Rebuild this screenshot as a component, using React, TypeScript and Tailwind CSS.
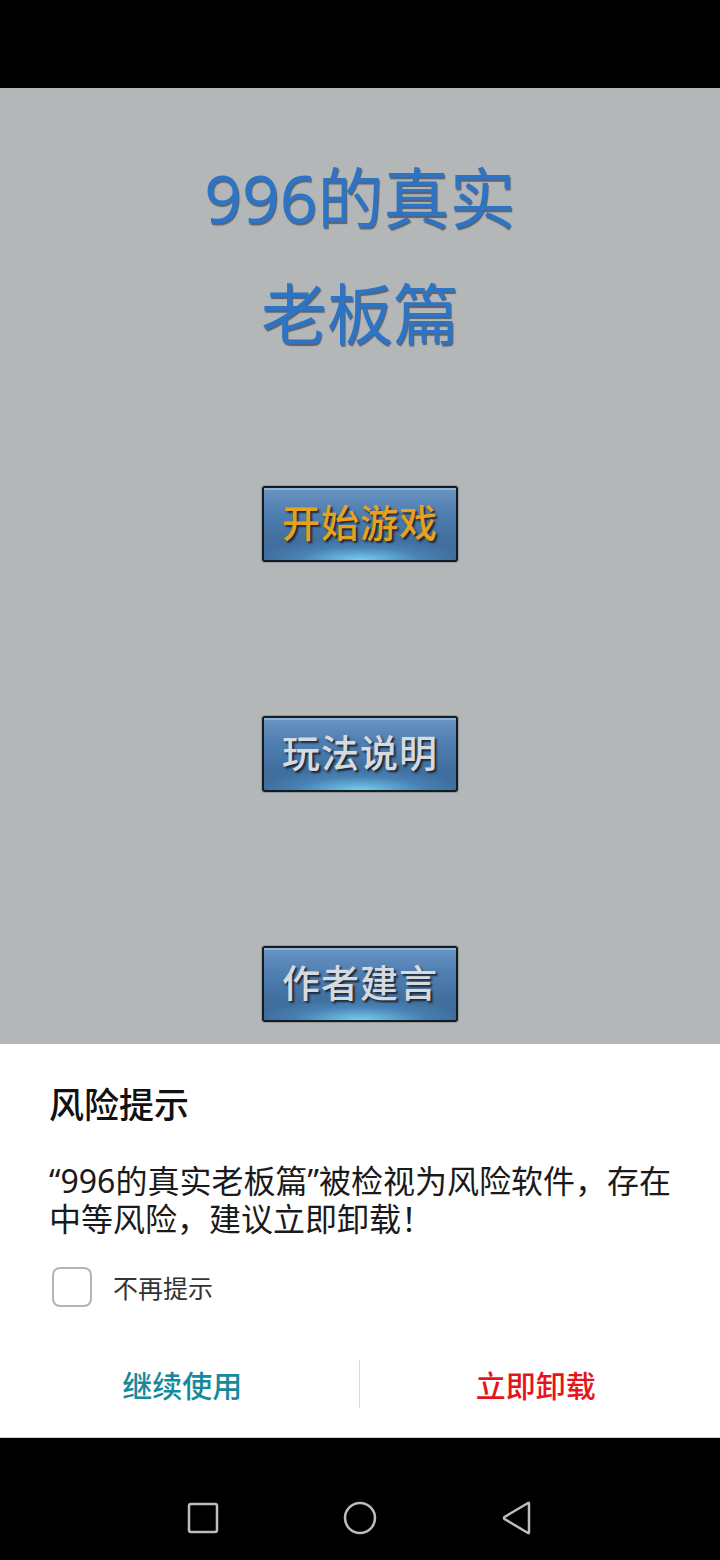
import React from 'react';

const cjk = { fontFamily: '"Noto Sans CJK SC", "Noto Sans", sans-serif' };
// Latin glyphs (digits, curly quotes) come from Noto Sans so the quotes stay narrow
const mixed = { fontFamily: '"Noto Sans", "Noto Sans CJK SC", sans-serif' };

function MenuButton({ label, gold }: { label: string; gold?: boolean }) {
  return (
    <button
      className="relative flex h-[76px] w-[196px] items-center justify-center overflow-hidden rounded-[3px] border-2 border-[#141c26] pb-[6px] shadow-[0_0_0_1px_rgba(90,100,110,0.35)]"
      style={{
        background:
          'radial-gradient(ellipse 55% 30% at 50% 100%, rgba(120,210,245,0.95), rgba(90,170,225,0.35) 60%, rgba(0,0,0,0) 100%), linear-gradient(180deg, #6a94c2 0%, #4f7eb1 35%, #41709f 70%, #3d6a9a 100%)',
      }}
    >
      <span className="pointer-events-none absolute inset-x-0 top-0 h-[2px] bg-[#8fb3d8]" />
      <span
        className={
          gold
            ? 'text-[38px] font-medium leading-none tracking-[1px] text-[#e6a11f] [text-shadow:2px_2px_2px_rgba(20,25,35,0.85)]'
            : 'text-[38px] font-medium leading-none tracking-[1px] text-[#d6dadf] [text-shadow:2px_2px_2px_rgba(20,25,35,0.85)]'
        }
      >
        {label}
      </span>
    </button>
  );
}

export default function App() {
  return (
    <div className="flex h-[1560px] w-[720px] flex-col bg-black" style={cjk}>
      {/* status bar */}
      <div className="h-[88px] shrink-0 bg-black" />

      {/* game menu */}
      <section className="flex h-[956px] shrink-0 flex-col items-center bg-[#b3b7b7] pt-[51px]">
        <h1
          className="text-center text-[66px] font-normal leading-[116px] text-[#2d74c4] [text-shadow:1px_2px_1px_rgba(15,30,60,0.55)]"
          style={mixed}
        >
          996的真实
          <br />
          老板篇
        </h1>
        <div className="mt-[115px] flex flex-col items-center gap-[154px]">
          <MenuButton label="开始游戏" gold />
          <MenuButton label="玩法说明" />
          <MenuButton label="作者建言" />
        </div>
      </section>

      {/* risk warning sheet */}
      <section className="shrink-0 border-b border-[#cfcfcf] bg-white pt-[37px]">
        <h2 className="px-[49px] text-[35px] font-medium leading-[44px] text-[#111]">风险提示</h2>
        <p className="mt-[37px] whitespace-nowrap px-[49px] text-[32px] leading-[38px] text-[#1a1a1a]" style={mixed}>
          “996的真实老板篇”被检视为风险软件，存在
          <br />
          中等风险，建议立即卸载！
        </p>
        <label className="mt-[29px] flex items-center gap-[21px] px-[52px]">
          <span className="h-[40px] w-[40px] rounded-[8px] border-2 border-[#b4b4b4] bg-white" />
          <span className="text-[25px] leading-[40px] text-[#333]">不再提示</span>
        </label>
        <div className="mt-[27px] flex h-[100px] items-center">
          <button className="flex-1 pl-[6px] text-center text-[30px] font-medium text-[#17899c]">继续使用</button>
          <div className="h-[48px] w-px bg-[#dcdcdc]" />
          <button className="flex-1 pr-[8px] text-center text-[30px] font-medium text-[#e8141c]">立即卸载</button>
        </div>
        <div className="h-[3px]" />
      </section>

      {/* navigation bar */}
      <nav className="flex flex-1 items-start justify-center gap-[124px] bg-black pt-[64px]">
        <svg width="32" height="32" viewBox="0 0 32 32" fill="none">
          <rect x="2" y="2" width="28" height="28" rx="2" stroke="#bdbdbd" strokeWidth="2.5" />
        </svg>
        <svg width="34" height="34" viewBox="0 0 34 34" fill="none" className="-mt-[1px]">
          <circle cx="17" cy="17" r="15" stroke="#bdbdbd" strokeWidth="2.5" />
        </svg>
        <svg width="32" height="34" viewBox="0 0 32 34" fill="none" className="-mt-[1px]">
          <path d="M28 2.5 L28 31.5 Q28 32.5 27 32 L3.5 18 Q2.5 17 3.5 16 L27 2 Q28 1.5 28 2.5 Z" stroke="#bdbdbd" strokeWidth="2.5" strokeLinejoin="round" />
        </svg>
      </nav>
    </div>
  );
}
